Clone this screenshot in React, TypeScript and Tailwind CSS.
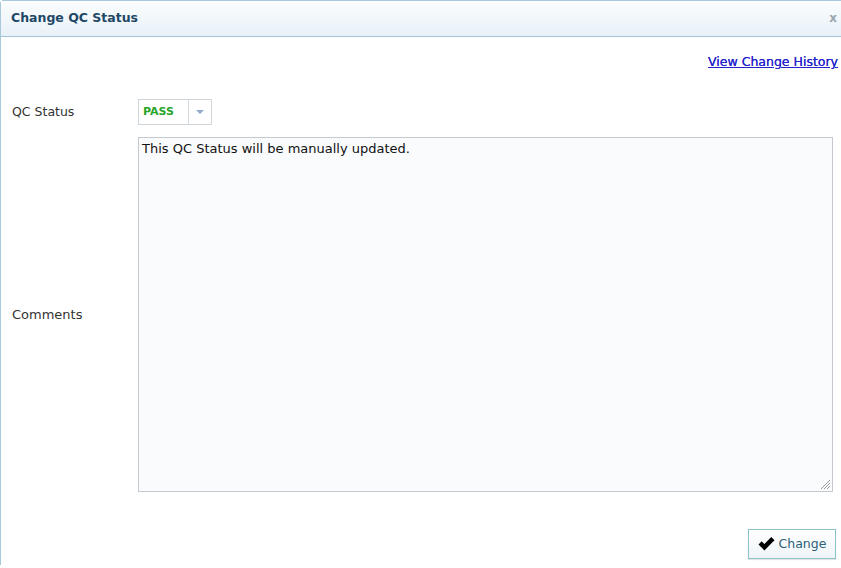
import React from "react";

export default function App() {
  return (
    <div className="w-[841px] h-[568px] bg-white overflow-hidden" style={{ fontFamily: '"DejaVu Sans", "Open Sans", sans-serif' }}>
      <div className="w-[845px] h-[565px] border-l border-t border-[#a9c9db] rounded-tl-[4px] bg-white flex flex-col">
        <div className="h-[36px] shrink-0 flex items-center justify-between pl-[10px] pr-[4px] border-b border-[#a3c4d8] bg-gradient-to-b from-[#fbfdfe] to-[#e8f1f8]">
          <span className="text-[12.5px] font-bold text-[#1f4866]">Change QC Status</span>
          <span className="text-[12px] text-[#9aa6b0] font-bold leading-none pr-[4px] mt-[-2px]">x</span>
        </div>
        <div className="flex-1 flex flex-col pl-[11px] pr-[9px]">
          <div className="flex justify-end pt-[16px] h-[50px]">
            <a href="#" className="text-[12.5px] text-[#2424cc] underline mr-[-2px] [text-shadow:0_0_0.4px_#2424cc]">View Change History</a>
          </div>
          <div className="flex items-center mt-[12px]">
            <div className="w-[126px] text-[12.5px] text-[#333]">QC Status</div>
            <div className="h-[26px] w-[74px] border border-[#cfd6dc] flex bg-white">
              <div className="flex-1 flex items-center pl-[4px] text-[11px] font-bold text-[#28a428]">PASS</div>
              <div className="w-[23px] border-l border-[#d4dadf] flex items-center justify-center">
                <svg width="8" height="5" viewBox="0 0 8 5"><path d="M0 0 L8 0 L4 4 Z" fill="#8fa9c6" /></svg>
              </div>
            </div>
          </div>
          <div className="flex items-center mt-[12px]">
            <div className="w-[126px] text-[13px] text-[#333]">Comments</div>
            <div className="relative w-[695px] h-[355px] border border-[#c3c9ce] bg-[#f9fbfd]">
              <div className="pl-[3px] pt-[1px] text-[13px] text-[#111]">This QC Status will be manually updated.</div>
              <svg className="absolute right-[2px] bottom-[2px]" width="10" height="10" viewBox="0 0 10 10">
                <path d="M10 1 L1 10 M10 4 L4 10 M10 7 L7 10" stroke="#999" strokeWidth="1" />
              </svg>
            </div>
          </div>
          <div className="flex justify-end mt-[37px]">
            <button className="h-[30px] w-[88px] border border-[#8fc3ca] bg-gradient-to-b from-[#ffffff] to-[#eef4f8] flex items-center justify-center gap-[4px] text-[12.5px] text-[#2e6178] shadow-[0_1px_1px_rgba(0,0,0,0.1)]">
              <svg width="17" height="14" viewBox="0 0 16 13"><path d="M0.5 7 L3.5 4 L6 6.5 L12.5 0 L15.5 3 L6 12.5 Z" fill="#000" /></svg>
              Change
            </button>
          </div>
        </div>
      </div>
    </div>
  );
}
